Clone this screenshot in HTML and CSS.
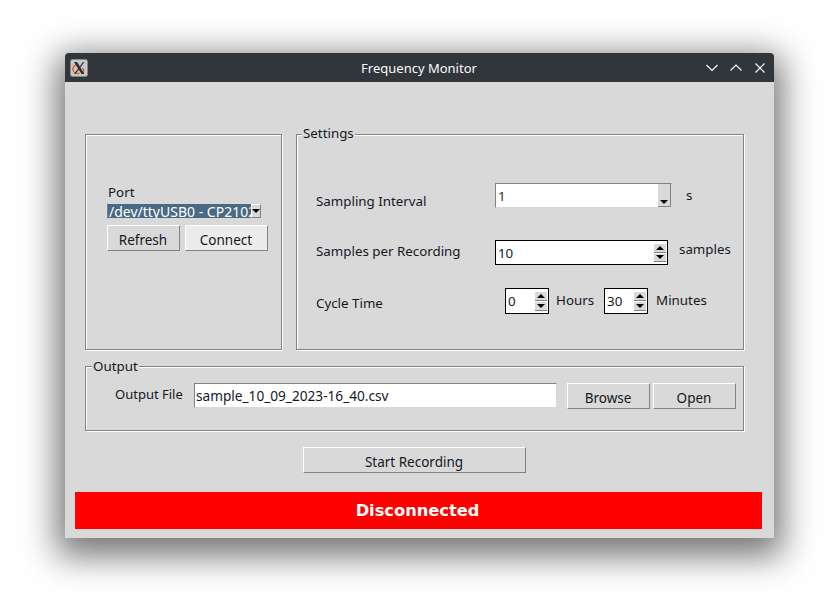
FILE: index.html
```html
<!DOCTYPE html>
<html lang="en">
<head>
    <meta charset="UTF-8">
    <title>Frequency Monitor</title>
    <link rel="stylesheet" href="styles.css">
</head>
<body>
    <div class="window">
        <div class="titlebar">
            <div class="app-icon">
                <svg width="18" height="18" viewBox="0 0 18 18">
                    <rect x="0.500" y="0.500" width="17" height="17" rx="2" fill="#c6c8c9" stroke="#84888a"/>
                    <path d="M9 5.500 C5 5 2.500 8 3 11 C3.500 14 6.500 15.500 9.500 14 M12.500 9 C14.500 10.500 14 13.500 11.500 14.500" fill="none" stroke="#e0682a" stroke-width="1.500"/>
                    <path d="M4 3 L7 3 L14.500 15 L11.500 15 Z" fill="#2c3033"/>
                    <path d="M13 3 L14.500 3 L5.500 15 L4 15 Z" fill="#2c3033"/>
                </svg>
            </div>
            <div class="title">Frequency Monitor</div>
            <div class="win-buttons">
                <svg class="win-min" width="12" height="8" viewBox="0 0 12 8"><path d="M0.500 1 L6 6.500 L11.500 1" fill="none" stroke="#fcfcfc" stroke-width="1.200"/></svg>
                <svg class="win-max" width="12" height="8" viewBox="0 0 12 8"><path d="M0.500 6.500 L6 1 L11.500 6.500" fill="none" stroke="#fcfcfc" stroke-width="1.200"/></svg>
                <svg width="10" height="10" viewBox="0 0 10 10"><path d="M0.500 0.500 L9.500 9.500 M9.500 0.500 L0.500 9.500" fill="none" stroke="#fcfcfc" stroke-width="1.200"/></svg>
            </div>
        </div>

        <div class="content">
            <div class="top-row">
                <div class="frame port-frame">
                    <div class="label port-label">Port</div>
                    <div class="combo">
                        <div class="combo-text">/dev/ttyUSB0 - CP2102</div>
                        <div class="combo-btn"><span class="arrow-down"></span></div>
                    </div>
                    <div class="port-buttons">
                        <div class="btn btn-refresh">Refresh</div>
                        <div class="btn btn-connect">Connect</div>
                    </div>
                </div>

                <div class="frame settings-frame">
                    <div class="legend">Settings</div>
                    <div class="row row-interval">
                        <div class="label row-label">Sampling Interval</div>
                        <div class="spin spin-flat">
                            <div class="spin-value value-first">1</div>
                            <div class="spin-single"><span class="arrow-down"></span></div>
                        </div>
                        <div class="label unit-s">s</div>
                    </div>
                    <div class="row row-samples">
                        <div class="label row-label">Samples per Recording</div>
                        <div class="spin spin-samples">
                            <div class="spin-value">10</div>
                            <div class="spin-btns">
                                <div class="spin-btn"><span class="arrow-up"></span></div>
                                <div class="spin-btn"><span class="arrow-down"></span></div>
                            </div>
                        </div>
                        <div class="label unit-samples">samples</div>
                    </div>
                    <div class="row row-cycle">
                        <div class="label row-label">Cycle Time</div>
                        <div class="spin spin-small">
                            <div class="spin-value">0</div>
                            <div class="spin-btns">
                                <div class="spin-btn"><span class="arrow-up"></span></div>
                                <div class="spin-btn"><span class="arrow-down"></span></div>
                            </div>
                        </div>
                        <div class="label unit-hours">Hours</div>
                        <div class="spin spin-small">
                            <div class="spin-value">30</div>
                            <div class="spin-btns">
                                <div class="spin-btn"><span class="arrow-up"></span></div>
                                <div class="spin-btn"><span class="arrow-down"></span></div>
                            </div>
                        </div>
                        <div class="label unit-minutes">Minutes</div>
                    </div>
                </div>
            </div>

            <div class="frame output-frame">
                <div class="legend">Output</div>
                <div class="label output-label">Output File</div>
                <div class="entry">sample_10_09_2023-16_40.csv</div>
                <div class="btn btn-browse">Browse</div>
                <div class="btn btn-open">Open</div>
            </div>

            <div class="start-wrap">
                <div class="btn btn-start">Start Recording</div>
            </div>

            <div class="status">Disconnected</div>
        </div>
    </div>
</body>
</html>
```

FILE: styles.css
```css
body {
    margin: 0;
    height: 615px;
    overflow: hidden;
    background-color: #ffffff;
    font-family: "Noto Sans", sans-serif;
    font-size: 13.33px;
    color: #14181f;
}
.window {
    margin: 53px 0 0 65px;
    width: 709px;
    height: 485px;
    background-color: #d9d9d9;
    border-radius: 4px 4px 0 0;
    box-shadow: 0 10px 34px 8px rgba(0, 0, 0, 0.55);
}
.titlebar {
    height: 29px;
    background-color: #31363b;
    border-radius: 4px 4px 0 0;
    display: flex;
    align-items: center;
    color: #fcfcfc;
}
.app-icon {
    width: 18px;
    height: 18px;
    margin-left: 5px;
}
.title {
    flex: 1;
    text-align: center;
    font-size: 13px;
    margin-left: 44px;
}
.win-buttons {
    display: flex;
    align-items: center;
    margin-right: 9px;
}
.win-min {
    margin-right: 12px;
}
.win-max {
    margin-right: 13px;
}
.content {
    padding: 52px 12px 0 10px;
}
.top-row {
    display: flex;
    gap: 14px;
    margin-left: 10px;
}
.frame {
    position: relative;
    box-sizing: border-box;
    border: 1px solid #828282;
    box-shadow: inset 1px 1px 0 #ffffff, 1px 1px 0 #ffffff;
}
.legend {
    position: absolute;
    top: -10px;
    left: 6px;
    padding: 0 1px;
    line-height: 18px;
    background-color: #d9d9d9;
}
.settings-frame .legend {
    top: -11px;
    left: 5px;
}
.label {
    line-height: 18px;
    white-space: nowrap;
}
.btn {
    box-sizing: border-box;
    height: 26px;
    padding-right: 1px;
    border: 1px solid;
    border-color: #ffffff #828282 #828282 #ffffff;
    text-align: center;
    font-size: 13.5px;
    line-height: 29px;
    background-color: #d9d9d9;
}

/* port */
.port-frame {
    width: 197px;
    height: 216px;
    padding: 48px 0 0 21px;
}
.port-label {
    margin-left: 1px;
}
.combo {
    display: flex;
    width: 155px;
    height: 16px;
    margin-top: 2px;
    box-sizing: border-box;
    border: 1px solid #d9d9d9;
    border-left-color: #828282;
    background-color: #ffffff;
}
.combo-text {
    width: 144px;
    overflow: hidden;
    white-space: nowrap;
    font-size: 14px;
    line-height: 15px;
    background-color: #4a6984;
    color: #ffffff;
    padding-left: 1px;
    box-sizing: border-box;
}
.combo-btn {
    flex: 1;
    display: flex;
    align-items: center;
    justify-content: center;
    background-color: #d9d9d9;
    border: 1px solid;
    border-color: #ffffff #828282 #828282 #ffffff;
}
.port-buttons {
    display: flex;
    gap: 5px;
    margin-top: 6px;
}
.btn-refresh {
    width: 73px;
}
.btn-connect {
    width: 83px;
    background-color: #ececec;
}

/* settings */
.settings-frame {
    width: 448px;
    height: 216px;
    padding-left: 19px;
}
.row {
    display: flex;
    align-items: flex-start;
}
.row-label {
    width: 179px;
}
.row-interval {
    margin-top: 48px;
}
.row-interval .row-label {
    margin-top: 9px;
}
.row-samples {
    margin-top: 30px;
}
.row-samples .row-label {
    margin-top: 2px;
}
.row-cycle {
    margin-top: 23px;
}
.row-cycle .row-label {
    width: 189px;
    margin-top: 6px;
}
.spin {
    box-sizing: border-box;
    display: flex;
    background-color: #ffffff;
    border: 1px solid #000000;
}
.spin-flat {
    width: 177px;
    height: 25px;
    border-color: #828282 #d9d9d9 #d9d9d9 #828282;
}
.spin-samples {
    width: 173px;
    height: 25px;
}
.spin-small {
    width: 44px;
    height: 26px;
}
.spin-value {
    flex: 1;
    padding-left: 2px;
    line-height: 24px;
}
.value-first {
    color: #3d2b10;
}
.spin-single {
    width: 12px;
    display: flex;
    align-items: flex-end;
    justify-content: center;
    padding-bottom: 2px;
    background-color: #d9d9d9;
    border-right: 1px solid #828282;
    border-bottom: 1px solid #828282;
}
.spin-btns {
    width: 12px;
    margin: 2px 1px;
    display: flex;
    flex-direction: column;
}
.spin-btn {
    flex: 1;
    display: flex;
    align-items: center;
    justify-content: center;
    background-color: #d9d9d9;
    border-bottom: 1px solid #828282;
    border-top: 1px solid #ffffff;
}
.arrow-down {
    width: 0;
    height: 0;
    border-left: 4px solid transparent;
    border-right: 4px solid transparent;
    border-top: 4px solid #000000;
}
.arrow-up {
    width: 0;
    height: 0;
    border-left: 4px solid transparent;
    border-right: 4px solid transparent;
    border-bottom: 4px solid #000000;
}
.unit-s {
    margin: 3px 0 0 14px;
}
.unit-samples {
    margin: 0 0 0 11px;
}
.unit-hours {
    margin: 3px 10px 0 7px;
}
.unit-minutes {
    margin: 3px 0 0 8px;
}

/* output */
.output-frame {
    display: flex;
    align-items: flex-start;
    width: 659px;
    height: 65px;
    margin: 16px 0 0 10px;
    padding-top: 16px;
}
.output-label {
    margin: 2px 0 0 29px;
    width: 79px;
    font-size: 13px;
}
.entry {
    box-sizing: border-box;
    width: 363px;
    height: 25px;
    padding-left: 1px;
    font-size: 13.65px;
    line-height: 24px;
    background-color: #ffffff;
    border: 1px solid;
    border-color: #828282 #d9d9d9 #d9d9d9 #828282;
}
.btn-browse {
    width: 83px;
    margin-left: 10px;
}
.btn-open {
    width: 83px;
    margin-left: 3px;
}

/* bottom */
.start-wrap {
    margin: 16px 0 0 228px;
}
.btn-start {
    width: 223px;
}
.status {
    height: 37px;
    margin-top: 19px;
    padding-right: 2px;
    background-color: #ff0000;
    color: #ffffff;
    text-align: center;
    font-family: "DejaVu Sans", sans-serif;
    font-size: 16.25px;
    font-weight: bold;
    line-height: 37px;
}
```
